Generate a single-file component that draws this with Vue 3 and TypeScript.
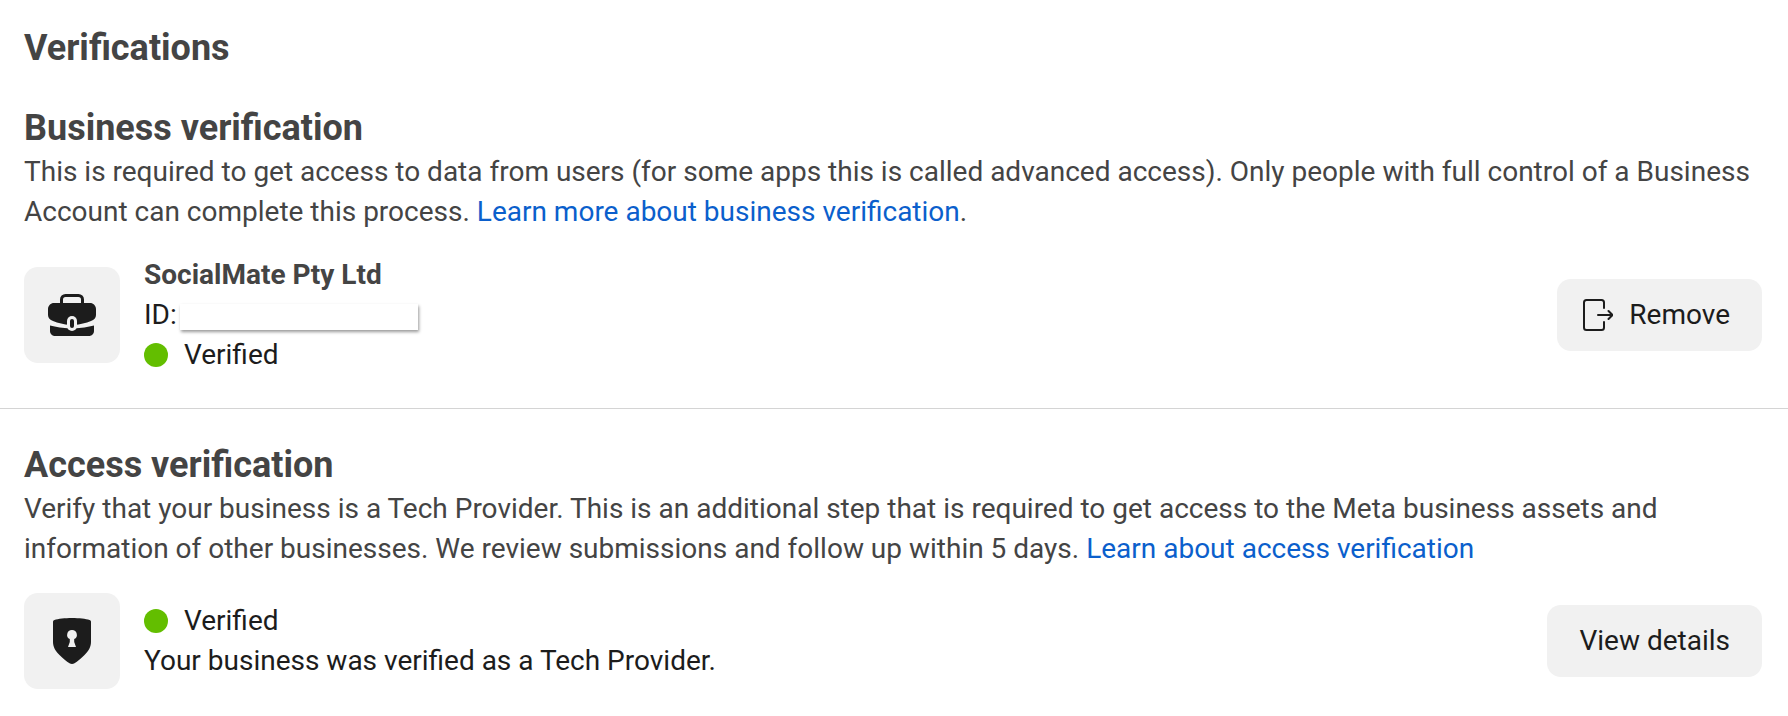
<script setup lang="ts">
const dotColor = '#63be00';
</script>

<template>
  <main class="page">
    <h1 class="page__title">Verifications</h1>

    <section class="section section--first">
      <h2 class="section__title">Business verification</h2>
      <p class="section__text">
        This is required to get access to data from users (for some apps this is called advanced access). Only people with full control of a Business Account can complete this process.
        <a class="link">Learn more about business verification</a>.
      </p>
      <div class="row row--tall">
        <div class="row__icon">
          <svg width="48" height="42" viewBox="0 0 48 42">
            <rect x="13.500" y="1.500" width="21" height="12" rx="4" fill="none" stroke="#1c1c1c" stroke-width="3" />
            <path fill="#1c1c1c" d="M6 9H42C45.300 9 48 11.700 48 15V21C48 24 46 26 43 27C38 29 32 30.500 26 31H22C16 30.500 10 29 5 27C2 26 0 24 0 21V15C0 11.700 2.700 9 6 9Z" />
            <path fill="#1c1c1c" d="M2 31.500C8 33 15 34 22 34.500H26C33 34 40 33 46 31.500V37C46 39.800 43.800 42 41 42H7C4.200 42 2 39.800 2 37Z" />
            <rect x="19" y="22" width="10" height="15" rx="5" fill="#f1f1f1" />
            <rect x="22" y="25" width="4" height="9" rx="2" fill="#1c1c1c" />
          </svg>
        </div>
        <div class="row__body">
          <div class="row__name">SocialMate Pty Ltd</div>
          <div class="row__line">ID:<span class="redact"></span></div>
          <div class="status">
            <span class="status__dot" :style="{ background: dotColor }"></span>
            <span>Verified</span>
          </div>
        </div>
        <button class="btn btn--icon" type="button">
          <svg width="30" height="32" viewBox="0 0 30 32" fill="none" stroke="#1c1c1c" stroke-width="2" stroke-linecap="round" stroke-linejoin="round">
            <path d="M21 9V3.500C21 2 20 1 18.500 1H3.500C2 1 1 2 1 3.500V28.500C1 30 2 31 3.500 31H18.500C20 31 21 30 21 28.500V23" />
            <path d="M15 16H29M25.500 12L29.500 16L25.500 20" />
          </svg>
          Remove
        </button>
      </div>
    </section>

    <hr class="divider" />

    <section class="section section--second">
      <h2 class="section__title">Access verification</h2>
      <p class="section__text">
        Verify that your business is a Tech Provider. This is an additional step that is required to get access to the Meta business assets and information of other businesses. We review submissions and follow up within 5 days.
        <a class="link">Learn about access verification</a>
      </p>
      <div class="row">
        <div class="row__icon">
          <svg width="38" height="46" viewBox="0 0 38 46">
            <path fill="#1c1c1c" d="M19 0C26 0 33 .8 36.500 2C37.500 2.300 38 3 38 4V24C38 29 35.500 33 31.500 37C28 40.500 24.500 43.500 21.500 45.300C20 46.200 18 46.200 16.500 45.300C13.500 43.500 10 40.500 6.500 37C2.500 33 0 29 0 24V4C0 3 .5 2.300 1.500 2C5 .8 12 0 19 0Z" />
            <path fill="#f1f1f1" d="M19 12A4.800 4.800 0 0 0 16.800 21.100L16.800 24L15 29H23L21.200 24L21.200 21.100A4.800 4.800 0 0 0 19 12Z" />
          </svg>
        </div>
        <div class="row__body">
          <div class="status">
            <span class="status__dot" :style="{ background: dotColor }"></span>
            <span>Verified</span>
          </div>
          <div class="row__line">Your business was verified as a Tech Provider.</div>
        </div>
        <button class="btn" type="button">View details</button>
      </div>
    </section>
  </main>
</template>

<style scoped>
.page {
  width: 1788px;
  height: 716px;
  box-sizing: border-box;
  padding: 26px 26px 0 24px;
  overflow: hidden;
  font-family: Roboto, "Liberation Sans", sans-serif;
  font-size: 28px;
  line-height: 40px;
  color: #1c1c1c;
}

.page__title {
  margin: 0;
  font-size: 36px;
  line-height: 44px;
  font-weight: 700;
  color: #444;
}

.section--first {
  margin-top: 36px;
}

.section--second {
  margin-top: 34px;
}

.section__title {
  margin: 0;
  font-size: 36px;
  line-height: 44px;
  font-weight: 700;
  color: #444;
}

.section__text {
  margin: 2px 0 0;
  color: #444;
}

.link {
  color: #0b5fcc;
}

.row {
  display: flex;
  align-items: center;
  margin-top: 24px;
}

.row--tall {
  margin-top: 23px;
}

.row__icon {
  display: flex;
  align-items: center;
  justify-content: center;
  flex: 0 0 96px;
  height: 96px;
  border-radius: 14px;
  background: #f1f1f1;
}

.row__body {
  flex: 1;
  margin-left: 24px;
}

.row__name {
  font-weight: 700;
  color: #444;
}

.row__line {
  display: flex;
  align-items: center;
}

.redact {
  width: 238px;
  height: 26px;
  margin: 4px 0 0 3px;
  background: #fff;
  box-shadow: 1px 2px 3px rgba(0, 0, 0, 0.4);
}

.status {
  display: flex;
  align-items: center;
  gap: 16px;
}

.status__dot {
  width: 24px;
  height: 24px;
  border-radius: 50%;
}

.btn {
  display: flex;
  align-items: center;
  gap: 16px;
  height: 72px;
  padding: 0 32px;
  border: 0;
  border-radius: 14px;
  background: #f1f1f1;
  color: #1c1c1c;
  font: inherit;
}

.btn--icon {
  padding-left: 26px;
}

.divider {
  height: 1px;
  margin: 33px -26px 0 -24px;
  border: 0;
  background: #d4d4d4;
}
</style>

<style>
html,
body {
  margin: 0;
  background: #fff;
}
</style>
